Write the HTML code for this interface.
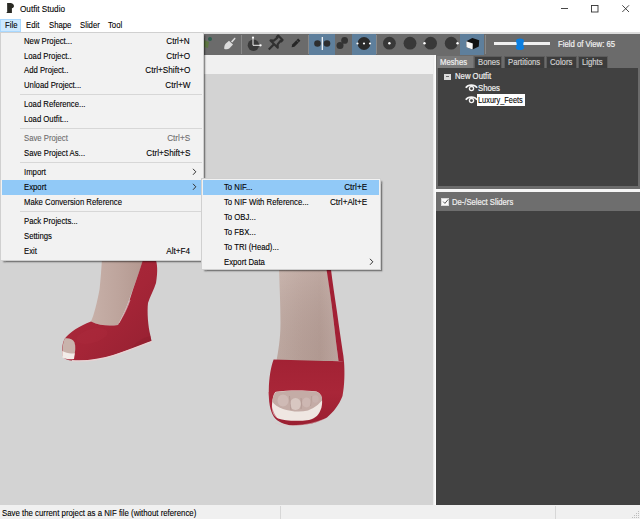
<!DOCTYPE html>
<html><head><meta charset="utf-8">
<style>
*{margin:0;padding:0;box-sizing:border-box}
html,body{width:640px;height:519px;overflow:hidden;background:#fff}
body{position:relative;font-family:"Liberation Sans",sans-serif;font-size:8.6px;color:#000}
.a{position:absolute}
.t{position:absolute;white-space:nowrap;line-height:1;transform-origin:0 0;-webkit-text-stroke:0.1px currentColor}
</style></head><body>
<div class="a" style="left:0px;top:0px;width:640px;height:32px;background:#fff;"></div>
<div class="t" style="left:20px;top:5px;font-size:8.8px;transform:scaleX(0.93);">Outfit Studio</div>
<div class="a" style="left:0px;top:19px;width:21px;height:13px;background:#cce8ff;border:1px solid #a8d8ff"></div>
<div class="t" style="left:5px;top:21px;font-size:8.6px;transform:scaleX(0.9);">File</div>
<div class="t" style="left:26px;top:21px;font-size:8.6px;transform:scaleX(0.9);">Edit</div>
<div class="t" style="left:49px;top:21px;font-size:8.6px;transform:scaleX(0.9);">Shape</div>
<div class="t" style="left:80px;top:21px;font-size:8.6px;transform:scaleX(0.9);">Slider</div>
<div class="t" style="left:108px;top:21px;font-size:8.6px;transform:scaleX(0.9);">Tool</div>
<div class="a" style="left:0px;top:32px;width:640px;height:2px;background:#dcdcdc;"></div>
<div class="a" style="left:0px;top:34px;width:640px;height:21px;background:#6b6b6b;"></div>
<div class="a" style="left:0px;top:55px;width:436px;height:19px;background:#f0f0f0;"></div>
<div class="a" style="left:0px;top:74px;width:433px;height:431px;background:#d3d3d3;"></div>
<div class="a" style="left:433px;top:55px;width:3px;height:450px;background:linear-gradient(90deg,#e6e6e6,#fafafa 60%,#fff);"></div>
<div class="a" style="left:436px;top:55px;width:204px;height:134px;background:#6b6b6b;"></div>
<div class="a" style="left:438px;top:68px;width:200px;height:118px;background:#414141;"></div>
<div class="a" style="left:436px;top:189px;width:204px;height:3px;background:#f6f6f6;"></div>
<div class="a" style="left:436px;top:192px;width:204px;height:19px;background:#6e6e6e;"></div>
<div class="a" style="left:436px;top:211px;width:204px;height:294px;background:#414141;"></div>
<!-- shoes -->
<svg class="a" style="left:0;top:74px" width="433" height="431" viewBox="0 74 433 431">
<defs>
<linearGradient id="legL" x1="0" y1="0" x2="1" y2="0">
<stop offset="0" stop-color="#c7b0a8"/><stop offset="0.5" stop-color="#bea59d"/><stop offset="1" stop-color="#b39890"/>
</linearGradient>
<linearGradient id="legR" x1="0" y1="0" x2="1" y2="0">
<stop offset="0" stop-color="#c4aea6"/><stop offset="0.35" stop-color="#bda59d"/><stop offset="0.7" stop-color="#b89f97"/><stop offset="1" stop-color="#c3aba4"/>
</linearGradient>
<linearGradient id="legRv" x1="0" y1="0" x2="0" y2="1">
<stop offset="0" stop-color="#fff" stop-opacity=".10"/><stop offset="1" stop-color="#000" stop-opacity=".04"/>
</linearGradient>
<linearGradient id="redL" x1="0" y1="0" x2="1" y2="1">
<stop offset="0" stop-color="#ad2a3c"/><stop offset="0.55" stop-color="#a52537"/><stop offset="1" stop-color="#942031"/>
</linearGradient>
<linearGradient id="redR" x1="0" y1="0" x2="0" y2="1">
<stop offset="0" stop-color="#a22234"/><stop offset="0.5" stop-color="#a92638"/><stop offset="1" stop-color="#9a1f31"/>
</linearGradient>
</defs>
<!-- left leg -->
<path d="M102 258 L144 258 C140 270 135 283 129 300 C125 311 121 319 118 325 C110 326 100 326 91 321.5 C94 315 97 303 99.6 289 C100.5 280 101.5 268 102 258 Z" fill="url(#legL)"/>
<!-- left shoe -->
<path d="M143.5 258 L155 258 C157.5 263 158 271 156 283 C154 290 150 296 148 303 C147 312 148 326 150.5 336 L151.5 341.3 C140 346 126 351 111 356 C96 360.5 82 361.5 71 360.5 C66 360 62.5 358 62.3 354 C62 348 62.5 342 65 338.3 C70 332 79 326 91 321.5 C100 326 110 326 118 325 C122 318 126 310 129 302 C135 283 140 270 143.5 258 Z" fill="url(#redL)"/>
<ellipse cx="92" cy="336" rx="16" ry="7" fill="#c03a4c" opacity=".12" transform="rotate(-15 92 336)"/>
<path d="M150.5 336 L151.5 341.3 C145 344 138 347 130 350 C135 343 142 338 150.5 336 Z" fill="#8a1c2c" opacity=".35"/>
<!-- left toe opening -->
<path d="M65 338.3 C69 337.8 73 339 74.5 342.5 C75.8 346.5 75.5 351 74 356.5 C70 357.8 66 357.5 62.5 356 C62.2 349 62.8 342 65 338.3 Z" fill="#c9b3ac"/>
<path d="M62.3 351 C66 353.2 70.5 354 74.8 353.2 L74 359 C69.5 359.6 65 359 62.5 357.4 Z" fill="#f3ece9"/>
<!-- left sole rim -->
<path d="M72 360.6 C86 361.5 100 359.7 114 355.3 C127 351.1 139 346.3 151.8 341.3" fill="none" stroke="#e9d2d3" stroke-width="1.3"/>
<path d="M119 323 C123 316 127 309 130 300" fill="none" stroke="#e2bfc2" stroke-width="0.9" opacity=".8"/>
<!-- right leg -->
<path d="M279 268 L327 268 C329 285 332 305 335 333 C336 343 337.5 352 338.5 361 L276.5 361 C278 352 280.5 340 280.5 323 C280.5 305 279.5 285 279 268 Z" fill="url(#legR)"/>
<path d="M279 268 L327 268 C329 285 332 305 335 333 C336 343 337.5 352 338.5 361 L276.5 361 C278 352 280.5 340 280.5 323 C280.5 305 279.5 285 279 268 Z" fill="url(#legRv)"/>
<!-- right strap -->
<path d="M326.3 268 L330.8 268 C332.5 282 334.6 296 337 312 C339.2 328 341.6 344 343.4 356 L344 362 L338.5 361 C337.5 352 336 343 335 333 C332 305 329 285 326.3 268 Z" fill="#a22034"/>
<!-- right vamp -->
<path d="M273.6 359.6 C296 360.5 320 361 339 361.3 L344 361.5 C344.8 372 344.6 385 342.5 396 C339 405 333.5 412 327 417.5 C319 422.5 306 425.5 293 425.5 C284 425 277.5 421.5 274 417 C270 411 268.5 401 268.8 390 C269 378 270.8 367 273.6 359.6 Z" fill="url(#redR)"/>
<!-- right opening -->
<path d="M276 391.8 C288 390.2 304 390.2 316.5 391.6 C322 393.4 323 400 321.5 407.5 C319.5 414 316 418.5 309 420 C298 421.5 285 421 278 418.5 C273 416 271.5 410.5 272 404 C272.5 398 273.8 393 276 391.8 Z" fill="#efe7e2"/>
<path d="M276.5 392 C289 390.3 304 390.3 316.5 391.7 C321 393.5 322.3 397 322 400.5 C319 404 315 407.5 308 410.5 C300 412.5 290 411.5 283 409 C278 407 274 404.5 272.3 401.5 C272.8 397 274.3 393 276.5 392 Z" fill="#c4aca6"/>
<ellipse cx="283" cy="400.5" rx="5.5" ry="6" fill="#d2beb9" opacity=".8"/>
<ellipse cx="295.5" cy="404" rx="5.5" ry="6" fill="#dccbc6" opacity=".85"/>
<ellipse cx="306.5" cy="402.5" rx="4.3" ry="5" fill="#d0bbb6" opacity=".75"/>
<ellipse cx="315.5" cy="399" rx="3.2" ry="3.8" fill="#cbb5b0" opacity=".7"/>
<path d="M289.5 396 C290 401 290.5 406 291 410" stroke="#a88e88" stroke-width="1" opacity=".6" fill="none"/>
<path d="M301 398 C301.5 402 301.5 406 301 409" stroke="#a88e88" stroke-width="1" opacity=".6" fill="none"/>
<path d="M311.5 396 C311.5 400 311 403 310.5 406" stroke="#a88e88" stroke-width="0.8" opacity=".5" fill="none"/>
<path d="M269 392 C270 405 273 416 280 421" fill="none" stroke="#b73045" stroke-width="1" opacity=".5"/>
<path d="M275 423 C285 427 305 427 325 419" fill="none" stroke="#e0c2c4" stroke-width="0.8" opacity=".6"/>
</svg>
<div class="a" style="left:0px;top:505px;width:640px;height:14px;background:#f0f0f0;"></div>
<div class="t" style="left:2px;top:509px;font-size:8.6px;transform:scaleX(0.91);">Save the current project as a NIF file (without reference)</div>
<div class="a" style="left:280px;top:506px;width:1px;height:13px;background:#d7d7d7;"></div>
<div class="a" style="left:555px;top:506px;width:1px;height:13px;background:#d7d7d7;"></div>
<svg class="a" style="left:630px;top:509px" width="10" height="10" viewBox="0 0 10 10"><g fill="#bdbdbd"><rect x="8" y="2" width="1" height="1"/><rect x="6" y="4" width="1" height="1"/><rect x="8" y="4" width="1" height="1"/><rect x="4" y="6" width="1" height="1"/><rect x="6" y="6" width="1" height="1"/><rect x="8" y="6" width="1" height="1"/><rect x="2" y="8" width="1" height="1"/><rect x="4" y="8" width="1" height="1"/><rect x="6" y="8" width="1" height="1"/><rect x="8" y="8" width="1" height="1"/></g></svg>
<!-- window controls -->
<svg class="a" style="left:555px;top:0" width="85" height="18" viewBox="0 0 85 18">
<path d="M6 8.5 H13" stroke="#333" stroke-width="0.9"/>
<rect x="36.5" y="5.5" width="6.5" height="6.5" fill="none" stroke="#333" stroke-width="0.9"/>
<path d="M67.3 5.3 L74 12 M74 5.3 L67.3 12" stroke="#333" stroke-width="0.9"/>
</svg>
<!-- app icon -->
<svg class="a" style="left:0;top:0" width="18" height="16" viewBox="0 0 18 16">
<path d="M7.1 3 H11 C12.6 3.3 13.9 4.5 14 6 C14 7.3 13.1 8 11.9 8.3 L11.9 13.1 H6.6 L6.8 12.1 H7.2 Z" fill="#2a2a24"/>
</svg>
<!-- toolbar icons -->
<div class="a" style="left:241px;top:35px;width:1px;height:19px;background:#888;"></div>
<div class="a" style="left:308px;top:35px;width:1px;height:19px;background:#888;"></div>
<div class="a" style="left:376px;top:35px;width:1px;height:19px;background:#888;"></div>
<div class="a" style="left:485px;top:35px;width:1px;height:19px;background:#888;"></div>
<div class="a" style="left:309px;top:34px;width:26px;height:21px;background:#5e7f9c;"></div>
<div class="a" style="left:352px;top:34px;width:24px;height:21px;background:#5e7f9c;"></div>
<div class="a" style="left:460px;top:34px;width:24px;height:21px;background:#5e7f9c;"></div>
<svg class="a" style="left:200px;top:34px" width="440" height="21" viewBox="200 34 440 21">
<!-- partial green icon at menu edge -->
<circle cx="210" cy="39" r="2" fill="#2f5f4f"/>
<path d="M204 40 L209 42 L208 48 L204 47 Z" fill="#5b7a3a" opacity=".8"/>
<!-- brush -->
<path d="M231 41.5 L234.2 38 C235 37.5 235.8 38.3 235.3 39 L232.3 42.5 Z" fill="#dcdcdc"/>
<path d="M229 40.8 L233 44.6 L229.5 48.3 C228 49.5 225.5 49.5 224.3 49 C224 47.6 224.4 45 225.8 43.6 Z" fill="#dcdcdc"/>
<!-- pie axis -->
<circle cx="253.4" cy="45.2" r="5.7" fill="#383838"/>
<path d="M253 37.5 V45.3 H260.5" fill="none" stroke="#eeeeee" stroke-width="1"/>
<circle cx="253" cy="37.6" r="1.1" fill="#fff"/><circle cx="260.6" cy="45.3" r="1.1" fill="#fff"/>
<!-- pushpin -->
<g transform="translate(274.6 43.6) rotate(45) scale(1.12)">
<path d="M-2.8 -7.3 H2.8 V-5.6 H2 L2.4 -1.4 L4.6 0.6 H-4.6 L-2.4 -1.4 L-2 -5.6 H-2.8 Z" fill="none" stroke="#303030" stroke-width="1.9" stroke-linejoin="round"/>
<path d="M0 0.8 V7.4" stroke="#303030" stroke-width="1.9"/>
</g>
<!-- pencil small -->
<g transform="translate(295.3 43.6) rotate(45)">
<path d="M-1.6 -5.6 H1.6 V2.8 L0 5.2 L-1.6 2.8 Z" fill="#262626"/>
<path d="M-1.6 -3.2 H1.6" stroke="#6b6b6b" stroke-width="0.6"/>
</g>
<!-- mirror -->
<circle cx="317.5" cy="43.5" r="3.3" fill="#2e2e2e"/><circle cx="327" cy="43.5" r="3.3" fill="#2e2e2e"/>
<path d="M322.3 37 V50" stroke="#fff" stroke-width="1.2"/>
<!-- two circles -->
<circle cx="340" cy="45.5" r="3.5" fill="#333"/><circle cx="344.6" cy="40.4" r="3.4" fill="#333"/>
<!-- big circle 3 dots -->
<circle cx="364" cy="43.5" r="6.5" fill="#2a2a2a"/>
<circle cx="357.5" cy="43.5" r="1.1" fill="#fff"/><circle cx="364" cy="43.5" r="1.1" fill="#fff"/><circle cx="370" cy="43.5" r="1.1" fill="#fff"/>
<!-- circles -->
<circle cx="389.4" cy="43.2" r="6.4" fill="#383838"/><circle cx="389.4" cy="43.2" r="1.2" fill="#fff"/>
<circle cx="410" cy="43.2" r="6.4" fill="#383838"/>
<circle cx="430.6" cy="43.2" r="6.4" fill="#383838"/><circle cx="424.5" cy="43.2" r="1.2" fill="#fff"/>
<circle cx="451.2" cy="43.2" r="6.4" fill="#383838"/><circle cx="457.5" cy="43.2" r="1.2" fill="#fff"/>
<!-- cube -->
<path d="M466.3 41.2 L472.3 38 L479.2 40.2 L478.8 46.6 L472.6 49.4 L466.4 47.2 Z" fill="#111"/>
<path d="M466.3 41.2 L472.8 43.6 L472.6 49.4 L466.4 47.2 Z" fill="#f7f7f7"/>
<!-- slider -->
<rect x="494" y="42" width="56" height="3" fill="#f0f0f0"/>
<path d="M516 40.5 C516 37.8 524 37.8 524 40.5 C524 42.2 523.3 43 523.3 44.2 C523.3 45.4 524 46.2 524 48 C524 50.8 516 50.8 516 48 C516 46.2 516.7 45.4 516.7 44.2 C516.7 43 516 42.2 516 40.5 Z" fill="#0a7ee0"/>
</svg>
<div class="t" style="left:557.5px;top:40px;font-size:8.6px;transform:scaleX(0.9);color:#f2f2f2;-webkit-text-stroke:0.2px #f2f2f2">Field of View: 65</div>
<div class="a" style="left:437px;top:56px;width:36px;height:12px;background:#7a7a7a;"></div>
<div class="t" style="left:440px;top:58px;font-size:8.6px;transform:scaleX(0.9);color:#f0f0f0;-webkit-text-stroke:0.2px #f0f0f0">Meshes</div>
<div class="a" style="left:474px;top:56px;width:28px;height:12px;background:#3c3c3c;border:1px solid #5c5c5c;border-bottom:0"></div>
<div class="t" style="left:478px;top:58px;font-size:8.6px;transform:scaleX(0.9);color:#cfcfcf;-webkit-text-stroke:0.2px #cfcfcf">Bones</div>
<div class="a" style="left:504px;top:56px;width:41px;height:12px;background:#3c3c3c;border:1px solid #5c5c5c;border-bottom:0"></div>
<div class="t" style="left:508px;top:58px;font-size:8.6px;transform:scaleX(0.9);color:#cfcfcf;-webkit-text-stroke:0.2px #cfcfcf">Partitions</div>
<div class="a" style="left:546px;top:56px;width:31px;height:12px;background:#3c3c3c;border:1px solid #5c5c5c;border-bottom:0"></div>
<div class="t" style="left:550px;top:58px;font-size:8.6px;transform:scaleX(0.9);color:#cfcfcf;-webkit-text-stroke:0.2px #cfcfcf">Colors</div>
<div class="a" style="left:578px;top:56px;width:30px;height:12px;background:#3c3c3c;border:1px solid #5c5c5c;border-bottom:0"></div>
<div class="t" style="left:582px;top:58px;font-size:8.6px;transform:scaleX(0.9);color:#cfcfcf;-webkit-text-stroke:0.2px #cfcfcf">Lights</div>
<div class="a" style="left:444px;top:73.5px;width:6.5px;height:6.5px;background:#dadada;"></div>
<div class="a" style="left:445.5px;top:76.3px;width:3.5px;height:1px;background:#6a6a6a;"></div>
<div class="t" style="left:455px;top:72px;font-size:8.6px;transform:scaleX(0.9);color:#f0f0f0;-webkit-text-stroke:0.2px #f0f0f0">New Outfit</div>
<svg class="a" style="left:464px;top:82px" width="15" height="24" viewBox="0 0 15 24">
<path d="M1.8 5.8 C4 2.2 10.5 2.2 13.2 5.8" fill="none" stroke="#f4f4f4" stroke-width="1.7"/>
<circle cx="7.5" cy="6.6" r="2.1" fill="#414141" stroke="#f4f4f4" stroke-width="1.3"/>
<path d="M1.8 17.8 C4 14.2 10.5 14.2 13.2 17.8" fill="none" stroke="#f4f4f4" stroke-width="1.7"/>
<circle cx="7.5" cy="18.6" r="2.1" fill="#414141" stroke="#f4f4f4" stroke-width="1.3"/>
</svg>
<div class="t" style="left:478px;top:84px;font-size:8.6px;transform:scaleX(0.9);color:#f0f0f0;-webkit-text-stroke:0.2px #f0f0f0">Shoes</div>
<div class="a" style="left:477px;top:94px;width:48px;height:12px;background:#fff;"></div>
<div class="t" style="left:478px;top:96px;font-size:8.6px;transform:scaleX(0.86);color:#000">Luxury_Feets</div>
<div class="a" style="left:441px;top:197.5px;width:8px;height:8px;background:#fafafa;border:1px solid #d8d8d8"></div>
<svg class="a" style="left:441px;top:197px" width="9" height="9" viewBox="0 0 9 9"><path d="M2.2 4.6 L3.9 6.4 L7.2 2.4" fill="none" stroke="#555" stroke-width="1"/></svg>
<div class="t" style="left:452px;top:198px;font-size:8.6px;transform:scaleX(0.89);color:#f0f0f0;-webkit-text-stroke:0.2px #f0f0f0">De-/Select Sliders</div>
<!-- file menu -->
<div class="a" style="left:0px;top:32px;width:204px;height:229px;background:#f2f2f2;border:1px solid #d0d0d0;box-shadow:2px 2px 1.5px -0.5px rgba(0,0,0,.42)"></div>
<div class="t" style="left:24px;top:37px;font-size:8.6px;transform:scaleX(0.9);">New Project...</div>
<div class="t" style="right:450px;top:37px;font-size:8.6px;transform:scaleX(0.95);transform-origin:100% 0;">Ctrl+N</div>
<div class="t" style="left:24px;top:52px;font-size:8.6px;transform:scaleX(0.9);">Load Project..</div>
<div class="t" style="right:450px;top:52px;font-size:8.6px;transform:scaleX(0.95);transform-origin:100% 0;">Ctrl+O</div>
<div class="t" style="left:24px;top:66px;font-size:8.6px;transform:scaleX(0.9);">Add Project..</div>
<div class="t" style="right:450px;top:66px;font-size:8.6px;transform:scaleX(0.95);transform-origin:100% 0;">Ctrl+Shift+O</div>
<div class="t" style="left:24px;top:81px;font-size:8.6px;transform:scaleX(0.9);">Unload Project...</div>
<div class="t" style="right:450px;top:81px;font-size:8.6px;transform:scaleX(0.95);transform-origin:100% 0;">Ctrl+W</div>
<div class="a" style="left:20px;top:94px;width:182px;height:1px;background:#d7d7d7;"></div>
<div class="t" style="left:24px;top:100px;font-size:8.6px;transform:scaleX(0.9);">Load Reference...</div>
<div class="t" style="left:24px;top:115px;font-size:8.6px;transform:scaleX(0.9);">Load Outfit...</div>
<div class="a" style="left:20px;top:128px;width:182px;height:1px;background:#d7d7d7;"></div>
<div class="t" style="left:24px;top:134px;font-size:8.6px;transform:scaleX(0.9);color:#6d6d6d;">Save Project</div>
<div class="t" style="right:450px;top:134px;font-size:8.6px;transform:scaleX(0.95);transform-origin:100% 0;color:#6d6d6d;">Ctrl+S</div>
<div class="t" style="left:24px;top:149px;font-size:8.6px;transform:scaleX(0.9);">Save Project As...</div>
<div class="t" style="right:450px;top:149px;font-size:8.6px;transform:scaleX(0.95);transform-origin:100% 0;">Ctrl+Shift+S</div>
<div class="a" style="left:20px;top:162px;width:182px;height:1px;background:#d7d7d7;"></div>
<div class="t" style="left:24px;top:168px;font-size:8.6px;transform:scaleX(0.9);">Import</div>
<svg class="a" style="left:192px;top:168px" width="5" height="8" viewBox="0 0 5 8"><path d="M1 0.8 L3.8 3.8 L1 6.8" fill="none" stroke="#333" stroke-width="1"/></svg>
<div class="a" style="left:2px;top:180px;width:200px;height:15px;background:#91c9f7;"></div>
<div class="t" style="left:24px;top:183px;font-size:8.6px;transform:scaleX(0.9);">Export</div>
<svg class="a" style="left:192px;top:183px" width="5" height="8" viewBox="0 0 5 8"><path d="M1 0.8 L3.8 3.8 L1 6.8" fill="none" stroke="#333" stroke-width="1"/></svg>
<div class="t" style="left:24px;top:198px;font-size:8.6px;transform:scaleX(0.9);">Make Conversion Reference</div>
<div class="a" style="left:20px;top:211px;width:182px;height:1px;background:#d7d7d7;"></div>
<div class="t" style="left:24px;top:217px;font-size:8.6px;transform:scaleX(0.9);">Pack Projects...</div>
<div class="t" style="left:24px;top:232px;font-size:8.6px;transform:scaleX(0.9);">Settings</div>
<div class="t" style="left:24px;top:247px;font-size:8.6px;transform:scaleX(0.9);">Exit</div>
<div class="t" style="right:450px;top:247px;font-size:8.6px;transform:scaleX(0.95);transform-origin:100% 0;">Alt+F4</div>
<!-- export submenu -->
<div class="a" style="left:201px;top:178px;width:180px;height:92px;background:#f2f2f2;border:1px solid #d0d0d0;box-shadow:2px 2px 1.5px -0.5px rgba(0,0,0,.42)"></div>
<div class="a" style="left:203px;top:180px;width:176px;height:15px;background:#91c9f7;"></div>
<div class="t" style="left:224px;top:183px;font-size:8.6px;transform:scaleX(0.9);">To NIF...</div>
<div class="t" style="right:273px;top:183px;font-size:8.6px;transform:scaleX(0.95);transform-origin:100% 0;">Ctrl+E</div>
<div class="t" style="left:224px;top:198px;font-size:8.6px;transform:scaleX(0.9);">To NIF With Reference...</div>
<div class="t" style="right:273px;top:198px;font-size:8.6px;transform:scaleX(0.95);transform-origin:100% 0;">Ctrl+Alt+E</div>
<div class="t" style="left:224px;top:213px;font-size:8.6px;transform:scaleX(0.9);">To OBJ...</div>
<div class="t" style="left:224px;top:228px;font-size:8.6px;transform:scaleX(0.9);">To FBX...</div>
<div class="t" style="left:224px;top:243px;font-size:8.6px;transform:scaleX(0.9);">To TRI (Head)...</div>
<div class="t" style="left:224px;top:258px;font-size:8.6px;transform:scaleX(0.9);">Export Data</div>
<svg class="a" style="left:369px;top:258px" width="5" height="8" viewBox="0 0 5 8"><path d="M1 0.8 L3.8 3.8 L1 6.8" fill="none" stroke="#333" stroke-width="1"/></svg>
</body></html>
